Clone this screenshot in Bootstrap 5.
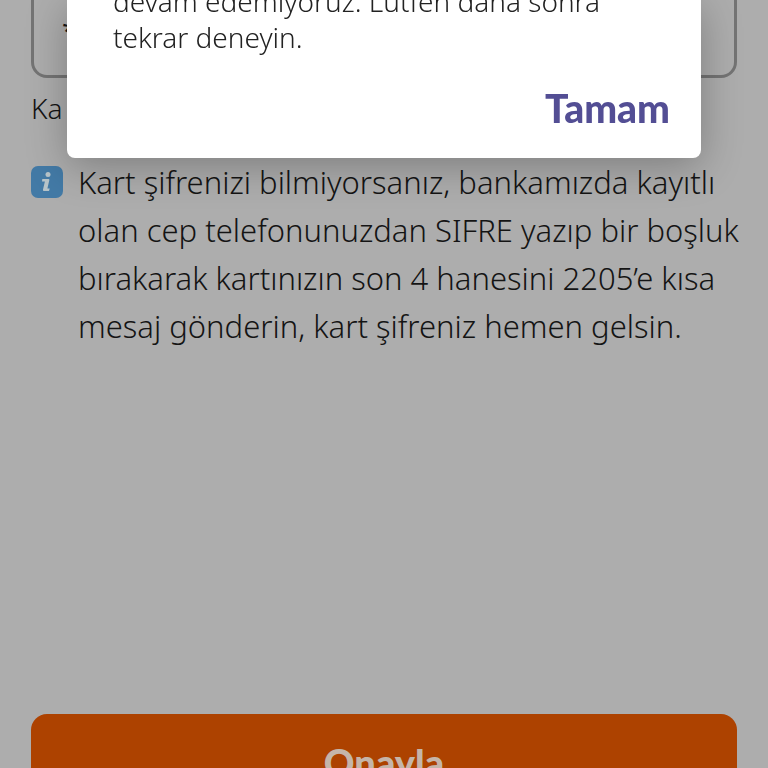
<!DOCTYPE html>
<html lang="tr">
<head>
<meta charset="utf-8">
<meta name="viewport" content="width=device-width, initial-scale=1">
<title>Kart şifresi</title>
<link href="https://cdn.jsdelivr.net/npm/bootstrap@5.3.0/dist/css/bootstrap.min.css" rel="stylesheet">
<style>
  body { background: #adadad; color: #141414; font-family: "Noto Sans", sans-serif; font-weight: 300; }
  .screen { padding: 0 31px; }
  /* the field continues above the top edge of the viewport */
  .pin-field { height: 96px; margin-top: -18px; padding: 0 28px; border: 3px solid #747474; border-radius: 16px; background: transparent; color: #141414; font-size: 28px; }
  .field-hint { margin-top: 12px; font-size: 28px; line-height: 36px; }
  .info-row { margin-top: 32px; gap: 15px; font-size: 31px; line-height: 48px; }
  .info-icon { width: 32px; height: 32px; margin-top: 8px; }
  /* the button continues below the bottom edge of the viewport */
  .confirm { height: 96px; margin-bottom: -42px; border-radius: 16px; background: #ad4200; color: #c5b5a9; }
  .strong-label { font-family: Lato, sans-serif; font-weight: 900; font-size: 39px; line-height: 48px; }
  .confirm.strong-label { font-size: 38px; }
  .overlay { padding: 0 67px; }
  .dialog { border-radius: 0 0 8px 8px; box-shadow: 0 8px 40px rgba(0, 0, 0, .28); }
  .dialog-text { margin-top: -17px; padding: 0 46px; color: #222; font-size: 28px; line-height: 36px; }
  .dialog-actions { padding: 29px 31px 26px; }
  .ok { color: #534e94; }
</style>
<script src="https://cdn.jsdelivr.net/npm/bootstrap@5.3.0/dist/js/bootstrap.bundle.min.js" defer></script>
</head>
<body class="m-0">
<main class="screen vh-100 d-flex flex-column overflow-hidden">
  <input id="pin" class="pin-field w-100 flex-shrink-0" type="text" value="****" aria-describedby="hint" aria-label="Kart şifresi">
  <div id="hint" class="field-hint">Ka</div>
  <div class="info-row d-flex align-items-start">
    <svg class="info-icon flex-shrink-0" viewBox="0 0 32 32" aria-hidden="true">
      <rect width="32" height="32" rx="7" fill="#437aa6"/>
      <circle cx="17" cy="8.500" r="2.500" fill="#b7c4c9"/>
      <path d="M11.300 13H17.500Q18.600 13 18.300 14.300L16.400 22.500H18.700L18 25H13Q11.600 25 12 23.500L13.900 15.500H11Z" fill="#b7c4c9"/>
    </svg>
    <p class="m-0 text-nowrap">Kart şifrenizi bilmiyorsanız, bankamızda kayıtlı<br>olan cep telefonunuzdan SIFRE yazıp bir boşluk<br>bırakarak kartınızın son 4 hanesini 2205’e kısa<br>mesaj gönderin, kart şifreniz hemen gelsin.</p>
  </div>
  <button type="button" class="confirm strong-label btn border-0 w-100 mt-auto flex-shrink-0">Onayla</button>
</main>
<div class="overlay position-fixed top-0 start-0 w-100 h-100 overflow-hidden" role="dialog" aria-modal="true" aria-labelledby="message">
  <div class="dialog bg-white d-flex flex-column">
    <p id="message" class="dialog-text mb-0">devam edemiyoruz. Lütfen daha sonra<br>tekrar deneyin.</p>
    <div class="dialog-actions d-flex justify-content-end">
      <button type="button" class="ok strong-label btn border-0 p-0">Tamam</button>
    </div>
  </div>
</div>
</body>
</html>
